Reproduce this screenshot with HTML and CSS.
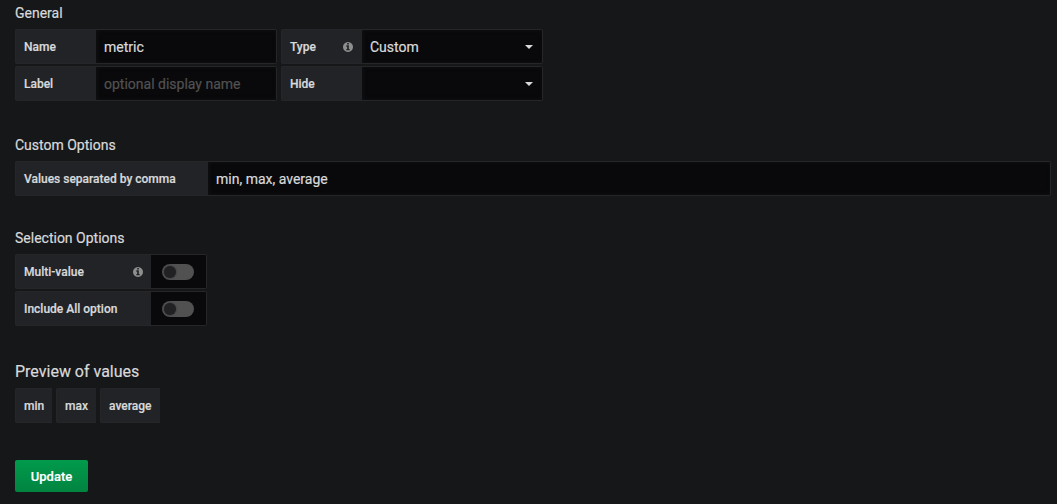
FILE: index.html
```html
<!DOCTYPE html>
<html lang="en">
<head>
<meta charset="utf-8">
<title>Variable editor</title>
<link rel="stylesheet" href="styles.css">
</head>
<body>
<svg class="defs" width="0" height="0">
  <symbol id="info" viewBox="0 0 1536 1536"><path fill-rule="evenodd" d="M1024 1248v-160q0-14-9-23t-23-9h-96V544q0-14-9-23t-23-9H544q-14 0-23 9t-9 23v160q0 14 9 23t23 9h96v320h-96q-14 0-23 9t-9 23v160q0 14 9 23t23 9h448q14 0 23-9t9-23zM896 352V192q0-14-9-23t-23-9H672q-14 0-23 9t-9 23v160q0 14 9 23t23 9h192q14 0 23-9t9-23zM1536 768q0 209-103 385.500T1153.500 1433 768 1536t-385.500-103T103 1153.500 0 768t103-385.500T382.500 103 768 0t385.500 103T1433 382.500 1536 768z"/></symbol>
</svg>
<main class="editor">
  <section class="section general">
    <h5 class="heading">General</h5>
    <div class="grid">
      <div class="field"><label class="label short">Name</label><div class="input">metric</div></div>
      <div class="field"><label class="label short">Type <svg class="info"><use href="#info"/></svg></label><div class="input select">Custom<i class="caret"></i></div></div>
      <div class="field"><label class="label short">Label</label><div class="input placeholder">optional display name</div></div>
      <div class="field"><label class="label short">Hide</label><div class="input select"><i class="caret"></i></div></div>
    </div>
  </section>
  <section class="section custom">
    <h5 class="heading">Custom Options</h5>
    <div class="field"><label class="label wide">Values separated by comma</label><div class="input">min, max, average</div></div>
  </section>
  <section class="section selection">
    <h5 class="heading">Selection Options</h5>
    <div class="switches">
      <div class="field"><label class="label medium">Multi-value <svg class="info"><use href="#info"/></svg></label><div class="switch"><span class="track"><span class="knob"></span></span></div></div>
      <div class="field"><label class="label medium">Include All option</label><div class="switch"><span class="track"><span class="knob"></span></span></div></div>
    </div>
  </section>
  <section class="section preview">
    <h5 class="heading large">Preview of values</h5>
    <div class="values">
      <span class="label value min">min</span>
      <span class="label value max">max</span>
      <span class="label value average">average</span>
    </div>
  </section>
  <button class="update">Update</button>
</main>
</body>
</html>
```

FILE: styles.css
```css
* { box-sizing: border-box; }
body {
  margin: 0;
  height: 504px;
  overflow: hidden;
  background: #161719;
  color: #d8d9da;
  font-family: Roboto, "Liberation Sans", sans-serif;
  font-size: 14px;
  -webkit-text-stroke: 0.2px;
}
.defs { display: block; }
.editor { padding: 3px 6px 0 15px; }
.heading {
  margin: 0 0 6px;
  height: 20px;
  font-size: 14px;
  line-height: 20px;
  font-weight: 400;
}
.heading.large { font-size: 16px; }
.grid {
  display: grid;
  grid-template-columns: 262px 262px;
  gap: 2px 4px;
}
.field { display: flex; height: 35px; }
.label {
  display: flex;
  align-items: center;
  justify-content: space-between;
  flex: none;
  height: 35px;
  padding: 0 7px 0 8px;
  border: 1px solid #262628;
  border-right: 0;
  border-radius: 2px 0 0 2px;
  background: #212327;
  font-size: 12px;
  font-weight: 500;
}
.short { width: 81px; }
.wide { width: 193px; }
.medium { width: 136px; }
.info { width: 10px; height: 10px; margin-right: 2px; fill: #8e8e8e; }
.medium .info { margin-right: 1px; }
.input {
  display: flex;
  align-items: center;
  justify-content: space-between;
  flex: 1;
  min-width: 0;
  padding: 1px 8px 0;
  border: 1px solid #262628;
  border-left: 0;
  border-radius: 0 2px 2px 0;
  background: #09090b;
  box-shadow: inset 1px 0 4px #111214;
}
.placeholder { color: #515151; }
.select { padding-right: 9px; }
.caret {
  margin-left: auto;
  border: 4px solid transparent;
  border-top-color: #d8d9da;
  border-bottom: 0;
}
.custom { padding-top: 34px; }
.selection { padding-top: 32px; }
.preview { padding-top: 36px; }
.switches { display: grid; gap: 2px; }
.switch {
  display: flex;
  align-items: center;
  justify-content: center;
  width: 56px;
  border: 1px solid #262628;
  border-left: 0;
  border-radius: 0 2px 2px 0;
  background: #09090b;
}
.track {
  width: 32px;
  height: 16px;
  padding: 2px;
  margin-right: 1px;
  border-radius: 8px;
  background: #515151;
}
.knob {
  display: block;
  width: 12px;
  height: 12px;
  border-radius: 50%;
  background: #212124;
  box-shadow: 0 0 2px #292929;
}
.values { display: flex; gap: 4px; }
.min { width: 37px; }
.max { width: 40px; }
.average { width: 60px; }
.update {
  display: block;
  width: 73px;
  height: 32px;
  margin-top: 37px;
  padding: 0;
  border: 0;
  border-radius: 2px;
  background: linear-gradient(#019a4c, #018440);
  color: #fff;
  font: 500 13px Roboto, sans-serif;
  -webkit-text-stroke: 0.2px;
}
```
